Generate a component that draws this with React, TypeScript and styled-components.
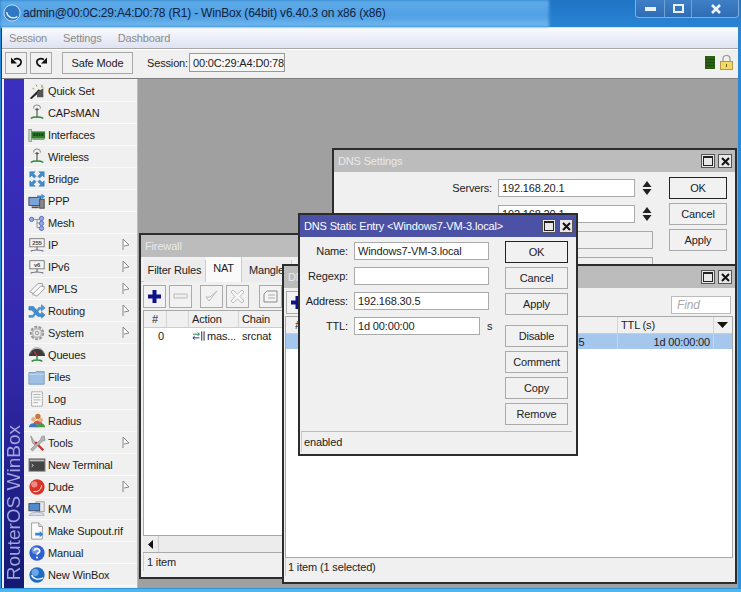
import React from 'react';
import styled, { createGlobalStyle } from 'styled-components';

const Global = createGlobalStyle`
  html, body { margin: 0; padding: 0; width: 741px; height: 592px; overflow: hidden; background: #2f8fdc; }
  * { box-sizing: border-box; }
`;

const Frame = styled.div`
  position: relative; width: 741px; height: 592px; overflow: hidden;
  display: flex; flex-direction: column; padding: 0 3px 4px 1px;
  font: 11px "Liberation Sans", Arial, sans-serif; letter-spacing: -.15px; color: #222;
  background: linear-gradient(180deg, #1f74c4 0, #2b86d6 30px, #2f93dc 100%);
`;
const BottomGlow = styled.div`
  position: absolute; left: 0; right: 0; bottom: 0; height: 3px; background: #4db8ea;
`;
const TitleBar = styled.div`
  position: relative; height: 27px; flex: none; display: flex; align-items: center; padding: 0 0 1px 2px;
  font-size: 12px; letter-spacing: -.2px; color: #10233f;
`;
const Glass = styled.div`
  position: absolute; left: -1px; top: 0; width: 549px; height: 27px;
  background: linear-gradient(180deg, #5fabe8 0, #4f9fe4 60%, #74baf0 100%);
  filter: blur(1.5px);
`;
const TitleContent = styled.div`
  position: relative; display: flex; align-items: center; gap: 2px;
`;
const Controls = styled.div`
  position: absolute; right: -1px; top: 0; width: 104px; height: 18px; display: grid;
  grid-template-columns: 29px 27px 48px; border: 1px solid #7fb0dc; border-top: 0;
  border-radius: 0 0 4px 4px; background: linear-gradient(180deg, #3f7fc6, #2f6cb4);
`;
const Ctl = styled.div`
  display: flex; align-items: center; justify-content: center; border-right: 1px solid #6fa2d2;
  &:last-child { border-right: 0; }
`;
const Client = styled.div`
  flex: 1; min-height: 0; display: flex; flex-direction: column; background: #f0f0f0;
  border-left: 1px solid #23405f; border-top: 1px solid #d6e6f5;
`;
const MenuBar = styled.div`
  height: 20px; flex: none; display: flex; align-items: center; gap: 16px; padding-left: 7px;
  color: #8a8a8a; background: linear-gradient(180deg, #fdfdfe 0, #f2f4fa 25%, #dfe3f2 100%);
  border-bottom: 1px solid #a8a8a8; box-sizing: content-box;
`;
const ToolBar = styled.div`
  height: 30px; flex: none; display: flex; align-items: center; padding: 0 5px 3px 3px;
  border-top: 1px solid #fff; border-bottom: 1px solid #7f7f7f; background: #f0f0f0;
`;
const ToolBtn = styled.div<{ $w: number; $mr: number }>`
  width: ${p => p.$w}px; height: 22px; margin-right: ${p => p.$mr}px; display: flex; align-items: center; justify-content: center;
  border: 1px solid #a8a8a8; background: #f1f1f1; color: #222;
`;
const SessionLabel = styled.span`
  width: 42px; flex: none;
`;
const SessionBox = styled.div`
  width: 96px; height: 19px; padding-left: 3px; display: flex; align-items: center; white-space: nowrap;
  border: 1px solid #999; background: #f6f6f6;
`;
const RightIcons = styled.div`
  margin-left: auto; display: flex; align-items: center; gap: 5px;
`;
const Main = styled.div`
  flex: 1; min-height: 0; display: flex;
`;
const Side = styled.div`
  width: 136px; flex: none; display: flex; padding-left: 2px; background: #f0f0f0;
`;
const Strip = styled.div`
  width: 20px; flex: none; display: flex; align-items: flex-start; justify-content: flex-end;
  background: linear-gradient(180deg, #3b2fc0 0, #3228aa 55%, #141a72 100%);
  writing-mode: vertical-rl;
`;
const StripText = styled.span`
  transform: rotate(180deg); color: #a2a6dc; font-size: 19px; letter-spacing: 0; line-height: 20px; white-space: nowrap; padding-top: 8px;
`;
const Nav = styled.div`
  flex: 1; display: flex; flex-direction: column; padding-top: 1px; border-right: 1px solid #bbb;
`;
const NavRow = styled.div`
  height: 22px; flex: none; display: flex; align-items: center; padding: 0 7px 0 4px; gap: 2px;
  border-bottom: 1px solid #fafafa; color: #1c1c1c; white-space: nowrap;
`;
const NavArrow = styled.div`
  margin-left: auto; display: flex;
`;
const Desktop = styled.div`
  position: relative; flex: 1; background: #a0a0a0; overflow: hidden;
`;
const Win = styled.div<{ $x: number; $y: number; $w: number; $h: number }>`
  position: absolute; left: ${p => p.$x - 138}px; top: ${p => p.$y - 78}px; width: ${p => p.$w}px; height: ${p => p.$h}px;
  display: flex; flex-direction: column; background: #f0f0f0; border: 2px solid #2c2c2c; overflow: hidden;
`;
const WinTitle = styled.div<{ $active?: boolean }>`
  height: 22px; flex: none; display: flex; align-items: center; justify-content: space-between; padding: 0 3px 0 4px;
  background: ${p => (p.$active ? '#4b52a6' : '#bcbcbc')}; color: ${p => (p.$active ? '#fff' : '#e9e9e9')}; white-space: nowrap;
`;
const WinBtns = styled.div`
  display: flex; gap: 3px;
`;
const WinBtn = styled.div`
  width: 14px; height: 14px; display: flex; align-items: center; justify-content: center; border: 1px solid #555; background: #e8e8e8;
`;
const Tabs = styled.div`
  height: 25px; flex: none; display: flex; align-items: flex-end; padding-left: 3px; border-bottom: 1px solid #ccc;
`;
const Tab = styled.div<{ $active?: boolean; $w: number }>`
  width: ${p => p.$w}px; height: ${p => (p.$active ? 25 : 22)}px; padding-bottom: ${p => (p.$active ? 4 : 3)}px; display: flex; align-items: center; justify-content: center;
  background: ${p => (p.$active ? '#fafafa' : '#ececec')}; white-space: nowrap;
  border-right: 1px solid #ccc; margin-bottom: -1px;
`;
const WinTools = styled.div`
  height: 28px; flex: none; display: flex; align-items: center; padding: 0 2px;
`;
const Tool = styled.div<{ $mr: number }>`
  width: 23px; height: 23px; flex: none; margin-right: ${p => p.$mr}px; display: flex; align-items: center; justify-content: center;
  border: 1px solid #aaa; background: #f2f2f2;
`;
const FindBox = styled.div`
  margin: 5px 2px 0 auto; width: 60px; height: 18px; padding-left: 5px; display: flex; align-items: center;
  background: #fff; border: 1px solid #bbb; color: #aaa; font-style: italic; font-size: 12px;
`;
const Table = styled.div<{ $flush?: boolean }>`
  flex: 1; min-height: 0; margin: 0 2px 0 ${p => (p.$flush ? 1 : 2)}px; display: flex; flex-direction: column; background: #fff; border: 1px solid #a8a8a8; overflow: hidden;
`;
const Row = styled.div<{ $sel?: boolean; $head?: boolean }>`
  display: flex; flex: none; height: ${p => (p.$head ? 17 : 15)}px; white-space: nowrap;
  background: ${p => (p.$head ? '#f0f0f0' : p.$sel ? '#a5c7ee' : '#fff')};
  border-bottom: ${p => (p.$head ? '1px solid #ccc' : '0')};
`;
const Cell = styled.div<{ $w: number; $align?: string; $line?: boolean }>`
  width: ${p => p.$w}px; flex: none; padding: 0 3px; display: flex; align-items: center; overflow: hidden; gap: 1px;
  justify-content: ${p => p.$align || 'flex-start'};
  border-right: ${p => (p.$line ? '1px solid #d4d4d4' : '0')};
`;
const ScrollRow = styled.div`
  height: 17px; flex: none; margin: 0 2px; display: flex; align-items: stretch; background: #ececec; border-bottom: 1px solid #aaa;
`;
const ScrollBtn = styled.div`
  width: 16px; display: flex; align-items: center; justify-content: center; border-right: 1px solid #ccc;
`;
const Status = styled.div<{ $flush?: boolean }>`
  height: 18px; flex: none; margin: 0 2px 6px ${p => (p.$flush ? 1 : 2)}px; padding-left: ${p => (p.$flush ? 2 : 3)}px; display: flex; align-items: center; white-space: nowrap;
  border-left: 1px solid #ccc;
`;
const SettingsBody = styled.div`
  flex: 1; display: flex; gap: 16px; padding: 5px 8px 0 0; justify-content: flex-end;
`;
const SettingsForm = styled.div`
  display: grid; grid-template-columns: auto 137px 13px; grid-auto-rows: 18px; row-gap: 8px; column-gap: 5px; align-items: center; padding-top: 2px;
`;
const ServerLabel = styled.span`
  display: flex; justify-content: flex-end; margin-right: 1px;
`;
const WideField = styled.div`
  grid-column: 2 / 4; width: 155px; height: 18px; border: 1px solid #aaa; background: #f0f0f0;
`;
const Field = styled.div<{ $w: number }>`
  width: ${p => p.$w}px; height: 18px; flex: none; padding-left: 3px; display: flex; align-items: center; white-space: nowrap;
  background: #fff; border: 1px solid #aaa;
`;
const Spin = styled.div`
  display: flex; justify-content: center;
`;
const BtnCol = styled.div`
  display: flex; flex-direction: column; gap: 4px;
`;
const Btn = styled.div<{ $w: number; $strong?: boolean; $gap?: boolean }>`
  width: ${p => p.$w}px; height: 22px; flex: none; display: flex; align-items: center; justify-content: center; background: #f1f1f1;
  border: 1px solid ${p => (p.$strong ? '#222' : '#aaa')}; margin-bottom: ${p => (p.$gap ? 6 : 0)}px;
`;
const DialogBody = styled.div`
  flex: 1; min-height: 0; display: flex; justify-content: space-between; padding: 4px 8px 0 0;
`;
const DialogForm = styled.div`
  display: grid; grid-template-columns: 48px auto; grid-auto-rows: 18px; row-gap: 7px; column-gap: 6px; padding-top: 1px; height: 100px;
`;
const DLabel = styled.span`
  display: flex; align-items: center; justify-content: flex-end; white-space: nowrap;
`;
const TtlWrap = styled.div`
  display: flex; align-items: center; gap: 7px;
`;
const DialogStatus = styled.div`
  height: 21px; flex: none; margin: 0 4px 2px 1px; padding-left: 2px; display: flex; align-items: center;
  border-top: 1px solid #bbb; border-left: 1px solid #ccc;
`;
const Svg = styled.svg`
  width: 18px; height: 18px; flex: none; display: block;
`;
const SvgText = styled.text`
  font: bold 6.5px "Liberation Sans", Arial, sans-serif; fill: #444;
`;

const Antenna = () => (
  <>
    <path d="M6 5a4 4 0 0 1 8 0M7.500 6h5" fill="none" stroke="#888" strokeWidth="1.100" />
    <circle cx="10" cy="6" r="1.300" fill="#555" />
    <path d="M10 7v8" stroke="#555" strokeWidth="1.300" />
    <path d="M3 16c3-2 11-2 14 0" fill="none" stroke="#2f8a3a" strokeWidth="1.600" />
  </>
);
const Screen = ({ t }: { t: string }) => (
  <>
    <rect x="2" y="3" width="16" height="9" fill="#f4f4f4" stroke="#777" />
    <SvgText x="10" y="10" textAnchor="middle">{t}</SvgText>
    <path d="M10 12v3M3 17c2-2 12-2 14 0" fill="none" stroke="#667" strokeWidth="1.200" />
  </>
);
const icons: Record<string, React.ReactNode> = {
  quick: (
    <>
      <path d="M2 18 12 8l2 2L4 19z" fill="#222" />
      <path d="M10 11l7-4v10h-7z" fill="#555" />
      <path d="M14 2l1 2 2-1-1 2 2 1-3 .5z" fill="#9ab43c" />
      <path d="M9 3l1 2M5 7l2 1" stroke="#7fa030" strokeWidth="1" />
    </>
  ),
  antenna: <Antenna />,
  iface: (
    <>
      <rect x="1" y="4" width="3" height="13" fill="#cfe0cf" stroke="#7a9a7a" />
      <rect x="4" y="6" width="15" height="8" fill="#2f7d2f" />
      <path d="M6 8h2v3H6zM9 8h2v3H9zM12 8h2v3h-2zM15 8h2v3h-2z" fill="#173f17" />
      <path d="M5 15h13" stroke="#8a8a8a" />
    </>
  ),
  bridge: (
    <path d="M2 2h6L6 4l3 3-2 2-3-3-2 2zM18 2h-6l2 2-3 3 2 2 3-3 2 2zM2 18h6l-2-2 3-3-2-2-3 3-2-2zM18 18h-6l2-2-3-3 2-2 3 3 2-2z" fill="#3f8fd2" stroke="#1c5f9f" strokeWidth=".5" />
  ),
  ppp: (
    <>
      <rect x="1" y="6" width="13" height="9" fill="#7aa4d8" stroke="#445" />
      <rect x="13" y="8" width="5" height="10" fill="#888" stroke="#444" />
      <path d="M4 17h8" stroke="#555" strokeWidth="2" />
      <path d="M10 4h5V2l4 3-4 3V6h-5z" fill="#3f8fd2" />
    </>
  ),
  mesh: (
    <>
      <path d="M5 6h5M10 6v9M10 10h5M10 15h5M10 6h5" fill="none" stroke="#888" />
      <circle cx="4" cy="6" r="2.400" fill="#9aa8e8" stroke="#5566bb" />
      <circle cx="15" cy="5" r="2.400" fill="#9aa8e8" stroke="#5566bb" />
      <circle cx="15" cy="10.500" r="2.400" fill="#9aa8e8" stroke="#5566bb" />
      <circle cx="15" cy="16" r="2.400" fill="#9aa8e8" stroke="#5566bb" />
    </>
  ),
  ip: <Screen t="255" />,
  v6: <Screen t="v6" />,
  mpls: (
    <>
      <path d="M2 13 11 4h5v3l-8 9z" fill="#f6f6f6" stroke="#999" />
      <path d="M5 16l9-9h4v3l-8 8z" fill="#fafafa" stroke="#999" />
    </>
  ),
  routing: (
    <>
      <path d="M1 5h5l7 8h2v-2l4 3.500-4 3.500v-2h-4L4 9H1z" fill="#3f8fd2" stroke="#1c5f9f" strokeWidth=".5" />
      <path d="M1 15h4l7-9h3V3l4 3.500-4 3.500V8h-2l-7 9H1z" fill="#4f9de0" stroke="#1c5f9f" strokeWidth=".5" />
    </>
  ),
  system: (
    <>
      <circle cx="10" cy="10" r="6.500" fill="none" stroke="#999" strokeWidth="3" strokeDasharray="3 1.500" />
      <circle cx="10" cy="10" r="5" fill="none" stroke="#bbb" strokeWidth="2" />
      <circle cx="10" cy="10" r="2" fill="#eee" stroke="#888" />
    </>
  ),
  queues: (
    <>
      <path d="M1 11a9 8 0 0 1 18 0z" fill="#3c3c3c" />
      <path d="M3 8a7 6 0 0 1 14 0" fill="none" stroke="#888" />
      <path d="M10 11 7 6" stroke="#d33" strokeWidth="1.200" />
      <path d="M10 11v4M4 17c3-2 9-2 12 0" fill="none" stroke="#2f8a3a" strokeWidth="1.600" />
    </>
  ),
  files: (
    <>
      <path d="M1 5h7l1-1h9v14H1z" fill="#9dc0e4" stroke="#7a9abb" />
      <path d="M1 7h17" stroke="#c9def2" />
    </>
  ),
  log: (
    <>
      <rect x="4" y="2" width="12" height="16" fill="#f8f8f8" stroke="#999" strokeDasharray="2 .5" />
      <path d="M6 5h8M6 8h8M6 11h8M6 14h5" stroke="#aaa" />
    </>
  ),
  radius: (
    <>
      <circle cx="11" cy="5" r="3" fill="#c9783a" />
      <path d="M6 14c0-6 10-6 10 0z" fill="#d9534f" />
      <circle cx="6" cy="8" r="2.500" fill="#e8b080" />
      <path d="M1 17c0-6 10-6 10 0z" fill="#3c78c0" />
      <circle cx="14" cy="9" r="2.500" fill="#e8b080" />
      <path d="M9 17c0-6 10-6 10 0z" fill="#4a9a4a" />
    </>
  ),
  tools: (
    <>
      <path d="M3 2l4 6 2 2-2 2-2-2z" fill="#bbb" stroke="#777" strokeWidth=".6" />
      <path d="M8 9l9 9" stroke="#c8332b" strokeWidth="2.500" />
      <path d="M18 2l-3 1-1 3-11 11 2 2L16 8l3-1z" fill="#b5b5b5" stroke="#777" strokeWidth=".6" />
    </>
  ),
  terminal: (
    <>
      <rect x="1" y="3" width="18" height="14" fill="#444" stroke="#999" />
      <rect x="2" y="4" width="16" height="2" fill="#bbb" />
      <path d="M4 9l2 1.500L4 12" fill="none" stroke="#ddd" />
    </>
  ),
  dude: (
    <>
      <circle cx="10" cy="10" r="8.500" fill="#d8342a" />
      <circle cx="7" cy="7" r="3.500" fill="#ef8a80" />
      <path d="M6 15c5 1 9-2 9-7" fill="none" stroke="#fff" strokeWidth="1" />
    </>
  ),
  kvm: (
    <>
      <rect x="9" y="2" width="9" height="11" fill="#e8e8e8" stroke="#999" />
      <rect x="1" y="4" width="12" height="8" fill="#4f8bd0" stroke="#445" />
      <path d="M3 15c4-2 10-2 14 0l1 2H1z" fill="#dfe5ee" stroke="#aab" />
    </>
  ),
  supout: (
    <>
      <path d="M4 1h8l4 4v14H4z" fill="#fbfbfb" stroke="#999" />
      <path d="M12 1v4h4" fill="#ddd" stroke="#999" />
      <path d="M8 12h5v-2l4 3.500-4 3.500v-2H8z" fill="#3a86d0" />
    </>
  ),
  manual: (
    <>
      <circle cx="10" cy="10" r="8.500" fill="#2f5fd0" />
      <circle cx="8" cy="7" r="4" fill="#6d95e6" />
      <path d="M7 7.500a3 2.500 0 1 1 4.500 2.300c-1 .6-1.500 1-1.500 2.200" fill="none" stroke="#fff" strokeWidth="2" />
      <circle cx="10" cy="15" r="1.200" fill="#fff" />
    </>
  ),
  winbox: (
    <>
      <circle cx="10" cy="10" r="8.500" fill="#1e6cc0" />
      <circle cx="8" cy="7" r="4" fill="#6aa5e6" />
      <path d="M4 10c2 5 8 6 13 3" fill="none" stroke="#fff" strokeWidth="1.400" />
    </>
  ),
};

const Icon = ({ name }: { name: string }) => <Svg viewBox="0 0 20 20">{icons[name]}</Svg>;

const Flag = () => (
  <svg width="8" height="13" viewBox="0 0 8 13">
    <path d="M1 1v11M1 1l6 6-5 1" fill="#fff" stroke="#888" />
  </svg>
);
const WinMax = () => (
  <svg width="10" height="10" viewBox="0 0 10 10"><rect x=".5" y=".5" width="9" height="9" fill="none" stroke="#222" /><path d="M0 1.500h10" stroke="#222" /></svg>
);
const WinClose = () => (
  <svg width="9" height="9" viewBox="0 0 9 9"><path d="M1 1l7 7M8 1 1 8" stroke="#111" strokeWidth="2" /></svg>
);
const SpinIcon = () => (
  <svg width="10" height="16" viewBox="0 0 10 16"><path d="M5 1l4.500 6h-9zM5 15l4.500-6h-9z" fill="#222" /></svg>
);
const Plus = () => (
  <svg width="15" height="15" viewBox="0 0 15 15"><path d="M5.500 1h4v4.500H14v4H9.500V14h-4V9.500H1v-4h4.500z" fill="#10108c" /></svg>
);
const Minus = () => (
  <svg width="15" height="9" viewBox="0 0 15 9"><rect x="1" y="2" width="13" height="4" fill="#eee" stroke="#bbb" /></svg>
);
const Check = () => (
  <svg width="15" height="15" viewBox="0 0 15 15"><path d="M2 8l3 4 8-10-7 6z" fill="#f8f8f8" stroke="#bbb" /></svg>
);
const Cross = () => (
  <svg width="15" height="15" viewBox="0 0 15 15"><path d="M3 1l4.500 4L12 1l2 2-4 4.500 4 4.500-2 2-4.500-4L3 14l-2-2 4-4.500L1 3z" fill="#f8f8f8" stroke="#bbb" /></svg>
);
const Note = () => (
  <svg width="15" height="13" viewBox="0 0 15 13"><path d="M4 1h10v11H1V4z" fill="#f4f4f4" stroke="#888" /><path d="M5 5h7M5 8h7" stroke="#aaa" /></svg>
);
const Masq = () => (
  <svg width="15" height="10" viewBox="0 0 15 10"><path d="M1 3h7M6 1l2 2-2 2" fill="none" stroke="#1c7a4a" /><path d="M8 7H1M3 5 1 7l2 2" fill="none" stroke="#1c2a8a" /><path d="M10.500 0v10M13 0v10" stroke="#222" /></svg>
);
const Undo = () => (
  <svg width="15" height="13" viewBox="0 0 15 13"><path d="M5 3.500c4-2 8 0 7 3.500-.5 2-2 3-4 3.500" fill="none" stroke="#111" strokeWidth="1.600" /><path d="M2 1.500v6h6z" fill="#111" /></svg>
);
const Redo = () => (
  <svg width="15" height="13" viewBox="0 0 15 13"><path d="M10 3.500c-4-2-8 0-7 3.500.5 2 2 3 4 3.500" fill="none" stroke="#111" strokeWidth="1.600" /><path d="M13 1.500v6H7z" fill="#111" /></svg>
);

const navItems: [string, string, boolean?][] = [
  ['quick', 'Quick Set'], ['antenna', 'CAPsMAN'], ['iface', 'Interfaces'], ['antenna', 'Wireless'],
  ['bridge', 'Bridge'], ['ppp', 'PPP'], ['mesh', 'Mesh'], ['ip', 'IP', true], ['v6', 'IPv6', true],
  ['mpls', 'MPLS', true], ['routing', 'Routing', true], ['system', 'System', true], ['queues', 'Queues'],
  ['files', 'Files'], ['log', 'Log'], ['radius', 'Radius'], ['tools', 'Tools', true], ['terminal', 'New Terminal'],
  ['dude', 'Dude', true], ['kvm', 'KVM'], ['supout', 'Make Supout.rif'], ['manual', 'Manual'], ['winbox', 'New WinBox'],
];

const TitleButtons = () => (
  <WinBtns>
    <WinBtn><WinMax /></WinBtn>
    <WinBtn><WinClose /></WinBtn>
  </WinBtns>
);

export default function App() {
  return (
    <Frame>
      <Global />
      <BottomGlow />
      <TitleBar>
        <Glass />
        <TitleContent>
          <Svg viewBox="0 0 20 20">
            <circle cx="10" cy="10" r="9" fill="#2f79c4" stroke="#cfe2f5" />
            <path d="M4 9c1 6 7 8 12 5" fill="none" stroke="#e8f2fc" strokeWidth="1.400" />
          </Svg>
          <span>admin@00:0C:29:A4:D0:78 (R1) - WinBox (64bit) v6.40.3 on x86 (x86)</span>
        </TitleContent>
        <Controls>
          <Ctl><svg width="11" height="5"><rect width="11" height="4" y="1" fill="#e8f0f8" /></svg></Ctl>
          <Ctl><svg width="11" height="9"><rect x="1" y="1" width="9" height="7" fill="none" stroke="#e8f0f8" strokeWidth="2" /></svg></Ctl>
          <Ctl><svg width="10" height="10"><path d="M1 1l8 8M9 1l-8 8" stroke="#eef4fa" strokeWidth="2.500" /></svg></Ctl>
        </Controls>
      </TitleBar>
      <Client>
        <MenuBar>
          <span>Session</span>
          <span>Settings</span>
          <span>Dashboard</span>
        </MenuBar>
        <ToolBar>
          <ToolBtn $w={22} $mr={3}><Undo /></ToolBtn>
          <ToolBtn $w={22} $mr={10}><Redo /></ToolBtn>
          <ToolBtn $w={71} $mr={14}>Safe Mode</ToolBtn>
          <SessionLabel>Session:</SessionLabel>
          <SessionBox>00:0C:29:A4:D0:78</SessionBox>
          <RightIcons>
            <svg width="10" height="13"><rect width="10" height="13" fill="#2c5f14" /><path d="M0 3.500h10M0 6.500h10M0 9.500h10" stroke="#1f4a0c" /></svg>
            <svg width="13" height="15" viewBox="0 0 13 15"><path d="M3 7V4a3.500 3.500 0 0 1 7 0v3" fill="none" stroke="#999" strokeWidth="1.200" /><rect x=".5" y="6.500" width="12" height="8" fill="#f4d866" stroke="#b39a40" /><rect x="6" y="9" width="1" height="3" fill="#6a5a10" /></svg>
          </RightIcons>
        </ToolBar>
        <Main>
          <Side>
            <Strip><StripText>RouterOS WinBox</StripText></Strip>
            <Nav>
              {navItems.map(([icon, label, sub]) => (
                <NavRow key={label}>
                  <Icon name={icon} />
                  <span>{label}</span>
                  {sub && <NavArrow><Flag /></NavArrow>}
                </NavRow>
              ))}
            </Nav>
          </Side>
          <Desktop>
            <Win $x={332} $y={147} $w={405} $h={170}>
              <WinTitle>
                <span>DNS Settings</span>
                <TitleButtons />
              </WinTitle>
              <SettingsBody>
                <SettingsForm>
                  <ServerLabel>Servers:</ServerLabel>
                  <Field $w={137}>192.168.20.1</Field>
                  <Spin><SpinIcon /></Spin>
                  <span />
                  <Field $w={137}>192.168.20.1</Field>
                  <Spin><SpinIcon /></Spin>
                  <span /><WideField />
                  <span /><WideField />
                </SettingsForm>
                <BtnCol>
                  <Btn $w={58} $strong>OK</Btn>
                  <Btn $w={58}>Cancel</Btn>
                  <Btn $w={58}>Apply</Btn>
                </BtnCol>
              </SettingsBody>
            </Win>
            <Win $x={139} $y={232} $w={300} $h={346}>
              <WinTitle><span>Firewall</span></WinTitle>
              <Tabs>
                <Tab $w={62}>Filter Rules</Tab>
                <Tab $w={36} $active>NAT</Tab>
                <Tab $w={50}>Mangle</Tab>
              </Tabs>
              <WinTools>
                <Tool $mr={3}><Plus /></Tool>
                <Tool $mr={8}><Minus /></Tool>
                <Tool $mr={3}><Check /></Tool>
                <Tool $mr={10}><Cross /></Tool>
                <Tool $mr={0}><Note /></Tool>
              </WinTools>
              <Table>
                <Row $head>
                  <Cell $w={23} $line $align="center">#</Cell>
                  <Cell $w={22} $line />
                  <Cell $w={50} $line>Action</Cell>
                  <Cell $w={60}>Chain</Cell>
                </Row>
                <Row>
                  <Cell $w={23} $align="flex-end">0</Cell>
                  <Cell $w={22} />
                  <Cell $w={50}><Masq />mas...</Cell>
                  <Cell $w={60}>srcnat</Cell>
                </Row>
              </Table>
              <ScrollRow><ScrollBtn><svg width="7" height="9"><path d="M1 4.500 6 0v9z" fill="#111" /></svg></ScrollBtn></ScrollRow>
              <Status>1 item</Status>
            </Win>
            <Win $x={282} $y={263} $w={455} $h={320}>
              <WinTitle>
                <span>DNS Static</span>
                <TitleButtons />
              </WinTitle>
              <WinTools>
                <Tool $mr={2}><Plus /></Tool>
                <FindBox>Find</FindBox>
              </WinTools>
              <Table $flush>
                <Row $head>
                  <Cell $w={24} $align="center">#</Cell>
                  <Cell $w={209} />
                  <Cell $w={99} $line />
                  <Cell $w={96} $line>TTL (s)</Cell>
                  <Cell $w={18}><svg width="11" height="6"><path d="M0 0h11L5.500 6z" fill="#111" /></svg></Cell>
                </Row>
                <Row $sel>
                  <Cell $w={24} />
                  <Cell $w={209} />
                  <Cell $w={99} $line>192.168.30.5</Cell>
                  <Cell $w={96} $align="flex-end" $line>1d 00:00:00</Cell>
                </Row>
              </Table>
              <Status $flush>1 item (1 selected)</Status>
            </Win>
            <Win $x={298} $y={212} $w={280} $h={243}>
              <WinTitle $active>
                <span>DNS Static Entry &lt;Windows7-VM-3.local&gt;</span>
                <TitleButtons />
              </WinTitle>
              <DialogBody>
                <DialogForm>
                  <DLabel>Name:</DLabel><Field $w={135}>Windows7-VM-3.local</Field>
                  <DLabel>Regexp:</DLabel><Field $w={135} />
                  <DLabel>Address:</DLabel><Field $w={135}>192.168.30.5</Field>
                  <DLabel>TTL:</DLabel>
                  <TtlWrap><Field $w={126}>1d 00:00:00</Field><span>s</span></TtlWrap>
                </DialogForm>
                <BtnCol>
                  <Btn $w={63} $strong>OK</Btn>
                  <Btn $w={63}>Cancel</Btn>
                  <Btn $w={63} $gap>Apply</Btn>
                  <Btn $w={63}>Disable</Btn>
                  <Btn $w={63}>Comment</Btn>
                  <Btn $w={63}>Copy</Btn>
                  <Btn $w={63}>Remove</Btn>
                </BtnCol>
              </DialogBody>
              <DialogStatus>enabled</DialogStatus>
            </Win>
          </Desktop>
        </Main>
      </Client>
    </Frame>
  );
}
